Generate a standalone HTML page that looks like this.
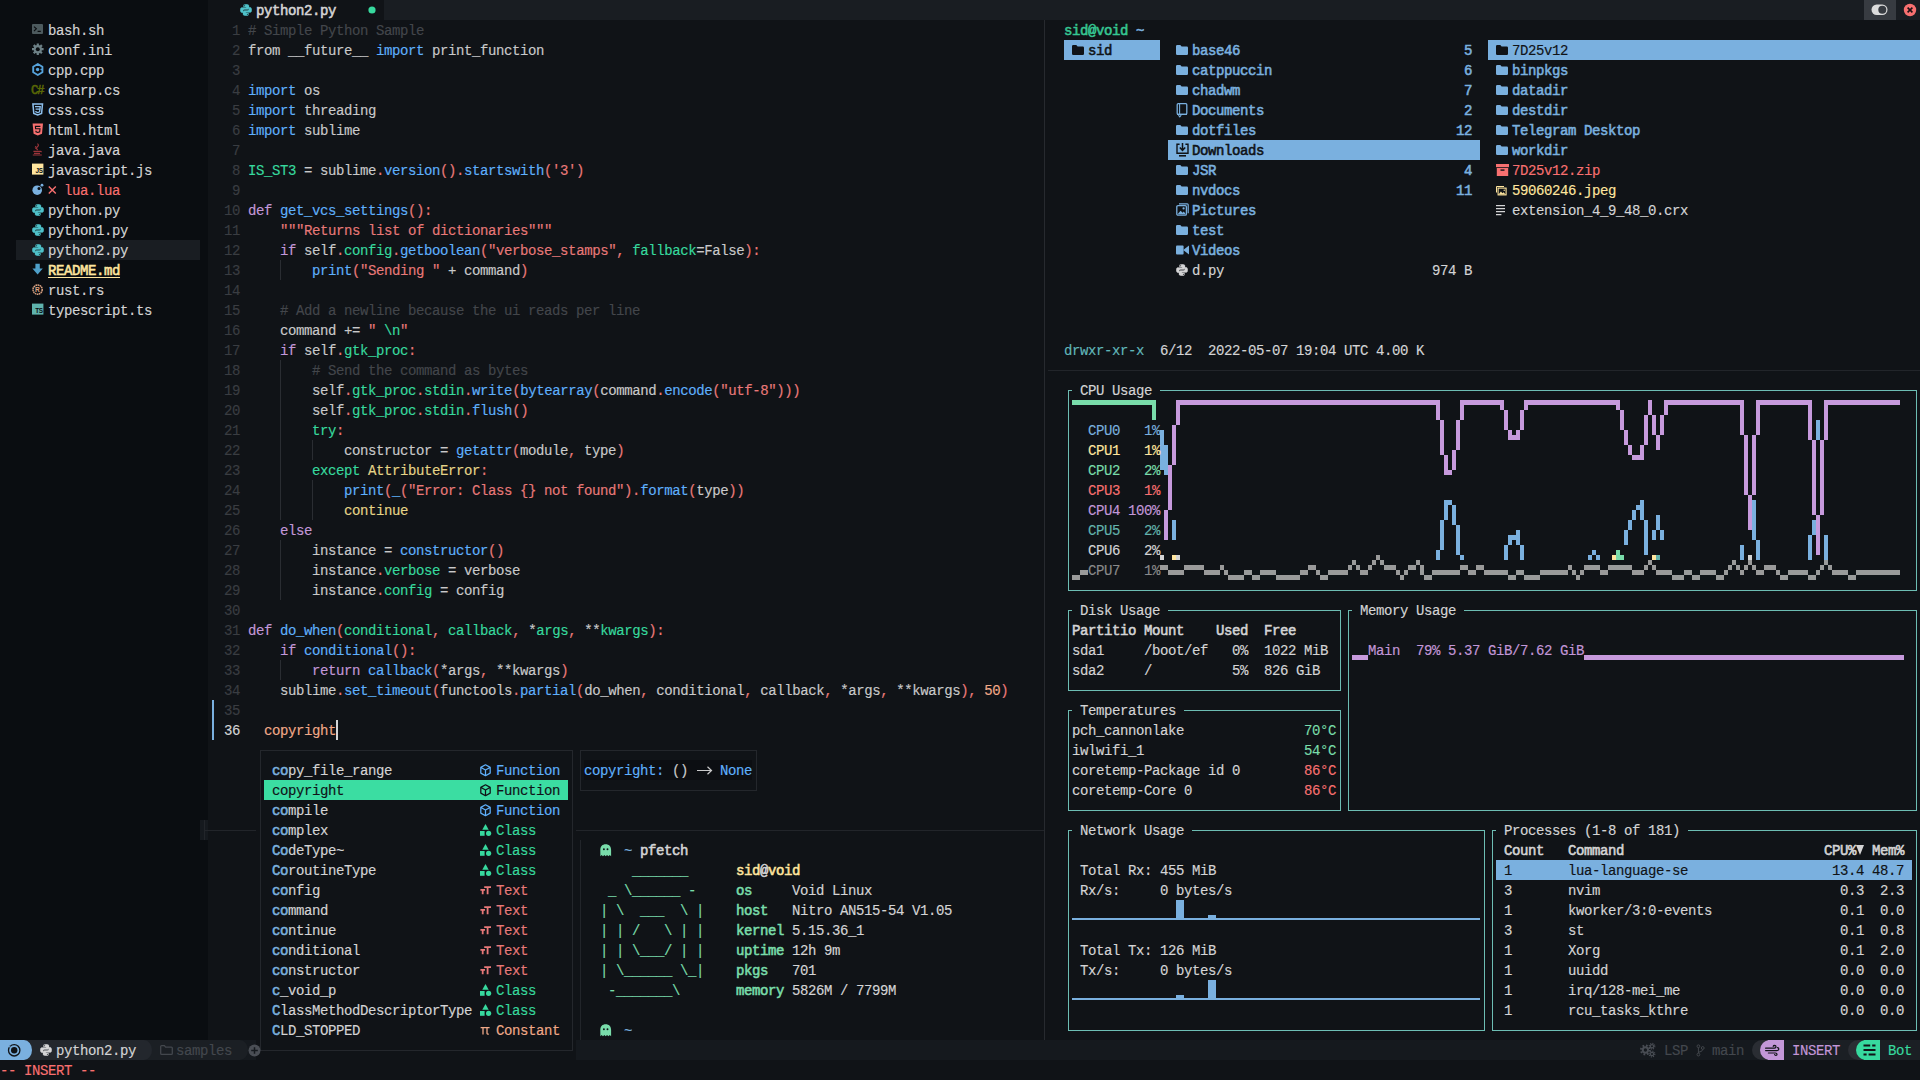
<!DOCTYPE html>
<html><head><meta charset="utf-8"><title>nvim</title>
<style>
html,body{margin:0;padding:0;overflow:hidden}
body{width:1920px;height:1080px;overflow:hidden;position:relative;background:#101317;
font-family:"Liberation Mono",monospace;font-size:14px;letter-spacing:-0.4px;line-height:20px;color:#c9c9ca}
.x{position:absolute;display:block}
.l{position:absolute;white-space:pre;height:20px;margin-top:1px;-webkit-text-stroke:0.15px}
b{font-weight:normal}
.bd{-webkit-text-stroke:0.55px}
.ul{text-decoration:underline;text-underline-offset:2px}
.bg{color:#101317}
.dark{color:#0a0d11}
.tab{color:#191d22}
.line{color:#22252a}
.w{color:#c9c9ca}
.W{color:#d4d4d5}
.c{color:#43464b}
.ln{color:#3a3d42}
.r{color:#e87979}
.R{color:#f87070}
.g{color:#37d99e}
.G{color:#79dcaa}
.b{color:#5fb0fc}
.B{color:#7ab0df}
.p{color:#c397d8}
.y{color:#e5d487}
.Y{color:#ffe59e}
.o{color:#f0a988}
.t{color:#63b3ad}
.k{color:#101317}
.gr{color:#4a4e54}
.cy{color:#50cad2}
.gy{color:#8a8a8a}
.sg{color:#43474d}
.rg{color:#36c692}
.dx{color:#60b6ba}
</style></head>
<body>
<i class="x" style="left:0px;top:0px;width:208px;height:1040px;background:#0a0d11;"></i>
<i class="x" style="left:384px;top:0px;width:1536px;height:20px;background:#191d22;"></i>
<i class="x" style="left:0px;top:1040px;width:1920px;height:20px;background:#15191e;"></i>
<i class="x" style="left:1044px;top:20px;width:1px;height:1020px;background:#272a2f;"></i>
<i class="x" style="left:1048px;top:370px;width:872px;height:1px;background:#22252a;"></i>
<i class="x" style="left:200px;top:820px;width:8px;height:20px;background:#15191e;"></i>
<i class="x" style="left:204px;top:820px;width:1px;height:20px;background:#22252a;"></i>
<i class="x" style="left:204px;top:830px;width:840px;height:1px;background:#22252a;"></i>
<i class="x" style="left:580px;top:840px;width:1px;height:200px;background:#22252a;"></i>
<i class="x" style="left:16px;top:240px;width:184px;height:20px;background:#191d22;"></i>
<div class="l" style="left:48px;top:20px"><b class="W">bash.sh</b></div>
<div class="l" style="left:48px;top:40px"><b class="W">conf.ini</b></div>
<div class="l" style="left:48px;top:60px"><b class="W">cpp.cpp</b></div>
<div class="l" style="left:48px;top:80px"><b class="W">csharp.cs</b></div>
<div class="l" style="left:48px;top:100px"><b class="W">css.css</b></div>
<div class="l" style="left:48px;top:120px"><b class="W">html.html</b></div>
<div class="l" style="left:48px;top:140px"><b class="W">java.java</b></div>
<div class="l" style="left:48px;top:160px"><b class="W">javascript.js</b></div>
<div class="l" style="left:48px;top:200px"><b class="W">python.py</b></div>
<div class="l" style="left:48px;top:220px"><b class="W">python1.py</b></div>
<div class="l" style="left:48px;top:240px"><b class="W">python2.py</b></div>
<div class="l" style="left:48px;top:280px"><b class="W">rust.rs</b></div>
<div class="l" style="left:48px;top:300px"><b class="W">typescript.ts</b></div>
<div class="l" style="left:64px;top:180px"><b class="R">lua.lua</b></div>
<svg class="x" style="left:48px;top:185px;" width="9" height="10" viewBox="0 0 9 10"><path d="M0.8 1.4l7 7.2M7.8 1.4l-7 7.2" stroke="#f87070" stroke-width="1.4"/></svg>
<div class="l" style="left:48px;top:260px"><b class="Y bd ul">README.md</b></div>
<svg class="x" style="left:32px;top:23px;" width="12" height="14" viewBox="0 0 12 14"><rect x="0" y="1" width="11" height="10" rx="1" fill="#4d5a5e"/><path d="M2 3.6l2.4 2.2L2 8M5.6 8.4h3.2" fill="none" stroke="#0a0d11" stroke-width="1.1"/></svg>
<svg class="x" style="left:32px;top:43px;" width="12" height="14" viewBox="0 0 12 14"><g fill="#6d8086"><circle cx="5.8" cy="6.2" r="4.2"/><g stroke="#6d8086" stroke-width="2.2"><path d="M5.8 0.4v11.6M0 6.2h11.6M1.7 2.1l8.2 8.2M9.9 2.1l-8.2 8.2"/></g></g><circle cx="5.8" cy="6.2" r="2" fill="#0a0d11"/></svg>
<svg class="x" style="left:32px;top:63px;" width="12" height="14" viewBox="0 0 12 14"><path d="M5.8 1L10.4 3.7v5.6L5.8 12 1.2 9.3V3.7z" fill="none" stroke="#56a3dc" stroke-width="1.9" stroke-linejoin="round"/><circle cx="5.6" cy="6.5" r="1.7" fill="#56a3dc"/><path d="M8.4 6.5h2.6" stroke="#56a3dc" stroke-width="1.2"/></svg>
<div class="l bd" style="left:31px;top:80px;color:#596706;font-size:12.5px;letter-spacing:-1.6px">C#</div>
<svg class="x" style="left:32px;top:103px;" width="12" height="14" viewBox="0 0 12 14"><path d="M0.9 0.9h9.6l-.9 9.6L5.7 12 1.8 10.5z" fill="none" stroke="#8ec0ee" stroke-width="1.5"/><path d="M3 3.6h5.2l-.25 2.6H3.6M7.9 6.2l-.3 2.7L5.7 9.6 3.9 8.9l-.1-.9" fill="none" stroke="#8ec0ee" stroke-width="1.3"/></svg>
<svg class="x" style="left:32px;top:123px;" width="12" height="14" viewBox="0 0 12 14"><path d="M0.6 0.6h10.4l-1 10.2L5.8 12.4 1.6 10.8z" fill="#f87070"/><path d="M8.4 3.4H3.4l.2 2.4h4.4l-.3 3L5.8 9.5 4 8.8l-.1-1" fill="none" stroke="#0a0d11" stroke-width="1.1"/></svg>
<svg class="x" style="left:32px;top:143px;" width="12" height="14" viewBox="0 0 12 14"><path d="M1.4 8.4h7q1 0 1 .8M2 10.4h6M0.8 12h9" fill="none" stroke="#9a343a" stroke-width="1.1"/><path d="M5.4 0.6q2 1.6 0 3.2t.4 3.2" fill="none" stroke="#9a343a" stroke-width="1.2"/><path d="M3.8 3q-1 1.6.2 3" fill="none" stroke="#9a343a" stroke-width="1"/></svg>
<svg class="x" style="left:32px;top:163px;" width="12" height="14" viewBox="0 0 12 14"><rect x="0" y="0.6" width="11.4" height="11" fill="#ffe59e"/><text x="3.4" y="10.4" font-family="Liberation Sans" font-weight="bold" font-size="6.4" fill="#0a0d11" letter-spacing="-0.3">JS</text></svg>
<svg class="x" style="left:32px;top:183px;" width="12" height="14" viewBox="0 0 12 14"><circle cx="5.2" cy="7.2" r="4.8" fill="#7ab0df"/><circle cx="7" cy="5.4" r="1.5" fill="#0a0d11"/><circle cx="10" cy="2.2" r="1.4" fill="#7ab0df"/></svg>
<svg class="x" style="left:32px;top:204px;" width="12" height="12" viewBox="0 0 12 12"><path d="M5.9 0.2C3.4 0.2 3.5 1.3 3.5 1.3v1.6h2.6v0.6H2.2S0.2 3.3 0.2 6s1.7 2.7 1.7 2.7h1.2V7.2s-0.1-1.7 1.7-1.7h2.6s1.6 0 1.6-1.6V1.7S9.2 0.2 5.9 0.2z" fill="#4fc1c9" stroke="#4fc1c9" stroke-width=".25"/><path d="M6.1 11.8c2.5 0 2.4-1.1 2.4-1.1V9.1H5.9V8.5h3.9s2 .2 2-2.5-1.7-2.7-1.7-2.7H8.9v1.5s.1 1.7-1.7 1.7H4.6S3 6.5 3 8.1v2.2s-.2 1.5 3.1 1.5z" fill="#4fc1c9" stroke="#4fc1c9" stroke-width=".25"/><circle cx="4.6" cy="1.7" r=".55" fill="#101317"/><circle cx="7.4" cy="10.3" r=".55" fill="#101317"/></svg>
<svg class="x" style="left:32px;top:224px;" width="12" height="12" viewBox="0 0 12 12"><path d="M5.9 0.2C3.4 0.2 3.5 1.3 3.5 1.3v1.6h2.6v0.6H2.2S0.2 3.3 0.2 6s1.7 2.7 1.7 2.7h1.2V7.2s-0.1-1.7 1.7-1.7h2.6s1.6 0 1.6-1.6V1.7S9.2 0.2 5.9 0.2z" fill="#4fc1c9" stroke="#4fc1c9" stroke-width=".25"/><path d="M6.1 11.8c2.5 0 2.4-1.1 2.4-1.1V9.1H5.9V8.5h3.9s2 .2 2-2.5-1.7-2.7-1.7-2.7H8.9v1.5s.1 1.7-1.7 1.7H4.6S3 6.5 3 8.1v2.2s-.2 1.5 3.1 1.5z" fill="#4fc1c9" stroke="#4fc1c9" stroke-width=".25"/><circle cx="4.6" cy="1.7" r=".55" fill="#101317"/><circle cx="7.4" cy="10.3" r=".55" fill="#101317"/></svg>
<svg class="x" style="left:32px;top:244px;" width="12" height="12" viewBox="0 0 12 12"><path d="M5.9 0.2C3.4 0.2 3.5 1.3 3.5 1.3v1.6h2.6v0.6H2.2S0.2 3.3 0.2 6s1.7 2.7 1.7 2.7h1.2V7.2s-0.1-1.7 1.7-1.7h2.6s1.6 0 1.6-1.6V1.7S9.2 0.2 5.9 0.2z" fill="#4fc1c9" stroke="#4fc1c9" stroke-width=".25"/><path d="M6.1 11.8c2.5 0 2.4-1.1 2.4-1.1V9.1H5.9V8.5h3.9s2 .2 2-2.5-1.7-2.7-1.7-2.7H8.9v1.5s.1 1.7-1.7 1.7H4.6S3 6.5 3 8.1v2.2s-.2 1.5 3.1 1.5z" fill="#4fc1c9" stroke="#4fc1c9" stroke-width=".25"/><circle cx="4.6" cy="1.7" r=".55" fill="#101317"/><circle cx="7.4" cy="10.3" r=".55" fill="#101317"/></svg>
<svg class="x" style="left:32px;top:263px;" width="12" height="14" viewBox="0 0 12 14"><path d="M3.4 0.8h4.4v4.6h3L5.6 11.6 0.4 5.4h3z" fill="#4e9fc9"/></svg>
<svg class="x" style="left:32px;top:283px;" width="12" height="14" viewBox="0 0 12 14"><circle cx="5.6" cy="6.6" r="4.6" fill="none" stroke="#dea584" stroke-width="1.5" stroke-dasharray="1.6 0.5"/><text x="3" y="9" font-family="Liberation Sans" font-weight="bold" font-size="6.6" fill="#dea584">R</text></svg>
<svg class="x" style="left:32px;top:303px;" width="12" height="14" viewBox="0 0 12 14"><rect x="0" y="0.6" width="11.4" height="11" fill="#5fb3ad"/><text x="3.2" y="10.4" font-family="Liberation Sans" font-weight="bold" font-size="6.4" fill="#0a0d11" letter-spacing="-0.3">TS</text></svg>
<svg class="x" style="left:240px;top:4px;" width="12" height="12" viewBox="0 0 12 12"><path d="M5.9 0.2C3.4 0.2 3.5 1.3 3.5 1.3v1.6h2.6v0.6H2.2S0.2 3.3 0.2 6s1.7 2.7 1.7 2.7h1.2V7.2s-0.1-1.7 1.7-1.7h2.6s1.6 0 1.6-1.6V1.7S9.2 0.2 5.9 0.2z" fill="#4fc1c9" stroke="#4fc1c9" stroke-width=".25"/><path d="M6.1 11.8c2.5 0 2.4-1.1 2.4-1.1V9.1H5.9V8.5h3.9s2 .2 2-2.5-1.7-2.7-1.7-2.7H8.9v1.5s.1 1.7-1.7 1.7H4.6S3 6.5 3 8.1v2.2s-.2 1.5 3.1 1.5z" fill="#4fc1c9" stroke="#4fc1c9" stroke-width=".25"/><circle cx="4.6" cy="1.7" r=".55" fill="#101317"/><circle cx="7.4" cy="10.3" r=".55" fill="#101317"/></svg>
<div class="l" style="left:256px;top:0px"><b class="W bd">python2.py</b></div>
<svg class="x" style="left:368px;top:6px;" width="8" height="8" viewBox="0 0 8 8"><circle cx="4" cy="4" r="3.6" fill="#37d99e"/></svg>
<i class="x" style="left:1864px;top:0px;width:32px;height:20px;background:#373b41;"></i>
<svg class="x" style="left:1871px;top:4px;" width="18" height="12" viewBox="0 0 18 12"><rect x="0.5" y="0.5" width="16" height="10.5" rx="5.2" fill="#dcdcdc"/><circle cx="11.3" cy="5.8" r="4" fill="#373b41"/></svg>
<svg class="x" style="left:1903px;top:3px;" width="14" height="14" viewBox="0 0 14 14"><circle cx="7" cy="7" r="6.2" fill="#f87070"/><path d="M4.6 4.6l4.8 4.8M9.4 4.6l-4.8 4.8" stroke="#1b1014" stroke-width="1.6"/></svg>
<div class="l" style="left:224px;top:20px"><b class="ln"> 1</b></div>
<div class="l" style="left:224px;top:40px"><b class="ln"> 2</b></div>
<div class="l" style="left:224px;top:60px"><b class="ln"> 3</b></div>
<div class="l" style="left:224px;top:80px"><b class="ln"> 4</b></div>
<div class="l" style="left:224px;top:100px"><b class="ln"> 5</b></div>
<div class="l" style="left:224px;top:120px"><b class="ln"> 6</b></div>
<div class="l" style="left:224px;top:140px"><b class="ln"> 7</b></div>
<div class="l" style="left:224px;top:160px"><b class="ln"> 8</b></div>
<div class="l" style="left:224px;top:180px"><b class="ln"> 9</b></div>
<div class="l" style="left:224px;top:200px"><b class="ln">10</b></div>
<div class="l" style="left:224px;top:220px"><b class="ln">11</b></div>
<div class="l" style="left:224px;top:240px"><b class="ln">12</b></div>
<div class="l" style="left:224px;top:260px"><b class="ln">13</b></div>
<div class="l" style="left:224px;top:280px"><b class="ln">14</b></div>
<div class="l" style="left:224px;top:300px"><b class="ln">15</b></div>
<div class="l" style="left:224px;top:320px"><b class="ln">16</b></div>
<div class="l" style="left:224px;top:340px"><b class="ln">17</b></div>
<div class="l" style="left:224px;top:360px"><b class="ln">18</b></div>
<div class="l" style="left:224px;top:380px"><b class="ln">19</b></div>
<div class="l" style="left:224px;top:400px"><b class="ln">20</b></div>
<div class="l" style="left:224px;top:420px"><b class="ln">21</b></div>
<div class="l" style="left:224px;top:440px"><b class="ln">22</b></div>
<div class="l" style="left:224px;top:460px"><b class="ln">23</b></div>
<div class="l" style="left:224px;top:480px"><b class="ln">24</b></div>
<div class="l" style="left:224px;top:500px"><b class="ln">25</b></div>
<div class="l" style="left:224px;top:520px"><b class="ln">26</b></div>
<div class="l" style="left:224px;top:540px"><b class="ln">27</b></div>
<div class="l" style="left:224px;top:560px"><b class="ln">28</b></div>
<div class="l" style="left:224px;top:580px"><b class="ln">29</b></div>
<div class="l" style="left:224px;top:600px"><b class="ln">30</b></div>
<div class="l" style="left:224px;top:620px"><b class="ln">31</b></div>
<div class="l" style="left:224px;top:640px"><b class="ln">32</b></div>
<div class="l" style="left:224px;top:660px"><b class="ln">33</b></div>
<div class="l" style="left:224px;top:680px"><b class="ln">34</b></div>
<div class="l" style="left:224px;top:700px"><b class="ln">35</b></div>
<div class="l" style="left:224px;top:720px"><b class="W">36</b></div>
<i class="x" style="left:212px;top:700px;width:1.5px;height:40px;background:#7ab0df;"></i>
<i class="x" style="left:280px;top:260px;width:1px;height:20px;background:#2a2d32;"></i>
<i class="x" style="left:280px;top:360px;width:1px;height:20px;background:#2a2d32;"></i>
<i class="x" style="left:280px;top:380px;width:1px;height:20px;background:#2a2d32;"></i>
<i class="x" style="left:280px;top:400px;width:1px;height:20px;background:#2a2d32;"></i>
<i class="x" style="left:280px;top:420px;width:1px;height:20px;background:#2a2d32;"></i>
<i class="x" style="left:280px;top:440px;width:1px;height:20px;background:#2a2d32;"></i>
<i class="x" style="left:280px;top:460px;width:1px;height:20px;background:#2a2d32;"></i>
<i class="x" style="left:280px;top:480px;width:1px;height:20px;background:#2a2d32;"></i>
<i class="x" style="left:280px;top:500px;width:1px;height:20px;background:#2a2d32;"></i>
<i class="x" style="left:280px;top:540px;width:1px;height:20px;background:#2a2d32;"></i>
<i class="x" style="left:280px;top:560px;width:1px;height:20px;background:#2a2d32;"></i>
<i class="x" style="left:280px;top:580px;width:1px;height:20px;background:#2a2d32;"></i>
<i class="x" style="left:280px;top:660px;width:1px;height:20px;background:#2a2d32;"></i>
<i class="x" style="left:312px;top:440px;width:1px;height:20px;background:#2a2d32;"></i>
<i class="x" style="left:312px;top:480px;width:1px;height:20px;background:#2a2d32;"></i>
<i class="x" style="left:312px;top:500px;width:1px;height:20px;background:#2a2d32;"></i>
<div class="l" style="left:248px;top:20px"><b class="c"># Simple Python Sample</b></div>
<div class="l" style="left:248px;top:40px">from __future__ <b class="b">import</b> print_function</div>
<div class="l" style="left:248px;top:80px"><b class="b">import</b> os</div>
<div class="l" style="left:248px;top:100px"><b class="b">import</b> threading</div>
<div class="l" style="left:248px;top:120px"><b class="b">import</b> sublime</div>
<div class="l" style="left:248px;top:160px"><b class="g">IS_ST3</b> = sublime<b class="r">.</b><b class="b">version</b><b class="r">().</b><b class="b">startswith</b><b class="r">('3')</b></div>
<div class="l" style="left:248px;top:200px"><b class="p">def</b> <b class="b">get_vcs_settings</b><b class="r">():</b></div>
<div class="l" style="left:248px;top:220px"><b class="r">    """Returns list of dictionaries"""</b></div>
<div class="l" style="left:248px;top:240px">    <b class="p">if</b> self<b class="r">.</b><b class="g">config</b><b class="r">.</b><b class="b">getboolean</b><b class="r">("verbose_stamps", </b><b class="g">fallback</b>=False<b class="r">):</b></div>
<div class="l" style="left:248px;top:260px">        <b class="b">print</b><b class="r">("Sending "</b> + command<b class="r">)</b></div>
<div class="l" style="left:248px;top:300px"><b class="c">    # Add a newline because the ui reads per line</b></div>
<div class="l" style="left:248px;top:320px">    command += <b class="r">" </b><b class="g">\n</b><b class="r">"</b></div>
<div class="l" style="left:248px;top:340px">    <b class="p">if</b> self<b class="r">.</b><b class="g">gtk_proc</b><b class="r">:</b></div>
<div class="l" style="left:248px;top:360px"><b class="c">        # Send the command as bytes</b></div>
<div class="l" style="left:248px;top:380px">        self<b class="r">.</b><b class="g">gtk_proc</b><b class="r">.</b><b class="g">stdin</b><b class="r">.</b><b class="b">write</b><b class="r">(</b><b class="b">bytearray</b><b class="r">(</b>command<b class="r">.</b><b class="b">encode</b><b class="r">("utf-8")))</b></div>
<div class="l" style="left:248px;top:400px">        self<b class="r">.</b><b class="g">gtk_proc</b><b class="r">.</b><b class="g">stdin</b><b class="r">.</b><b class="b">flush</b><b class="r">()</b></div>
<div class="l" style="left:248px;top:420px">        <b class="g">try</b><b class="r">:</b></div>
<div class="l" style="left:248px;top:440px">            constructor = <b class="b">getattr</b><b class="r">(</b>module<b class="r">,</b> type<b class="r">)</b></div>
<div class="l" style="left:248px;top:460px">        <b class="g">except</b> <b class="y">AttributeError</b><b class="r">:</b></div>
<div class="l" style="left:248px;top:480px">            <b class="b">print</b><b class="r">(</b><b class="b">_</b><b class="r">("Error: Class {} not found").</b><b class="b">format</b><b class="r">(</b>type<b class="r">))</b></div>
<div class="l" style="left:248px;top:500px">            <b class="y">continue</b></div>
<div class="l" style="left:248px;top:520px">    <b class="p">else</b></div>
<div class="l" style="left:248px;top:540px">        instance = <b class="b">constructor</b><b class="r">()</b></div>
<div class="l" style="left:248px;top:560px">        instance<b class="r">.</b><b class="g">verbose</b> = verbose</div>
<div class="l" style="left:248px;top:580px">        instance<b class="r">.</b><b class="g">config</b> = config</div>
<div class="l" style="left:248px;top:620px"><b class="p">def</b> <b class="b">do_when</b><b class="r">(</b><b class="g">conditional</b><b class="r">,</b> <b class="g">callback</b><b class="r">,</b> *<b class="g">args</b><b class="r">,</b> **<b class="g">kwargs</b><b class="r">):</b></div>
<div class="l" style="left:248px;top:640px">    <b class="p">if</b> <b class="b">conditional</b><b class="r">():</b></div>
<div class="l" style="left:248px;top:660px">        <b class="p">return</b> <b class="b">callback</b><b class="r">(</b>*args<b class="r">,</b> **kwargs<b class="r">)</b></div>
<div class="l" style="left:248px;top:680px">    sublime<b class="r">.</b><b class="b">set_timeout</b><b class="r">(</b>functools<b class="r">.</b><b class="b">partial</b><b class="r">(</b>do_when<b class="r">,</b> conditional<b class="r">,</b> callback<b class="r">,</b> *args<b class="r">,</b> **kwargs<b class="r">),</b> <b class="o">50</b><b class="r">)</b></div>
<div class="l" style="left:248px;top:720px"><b class="o">  copyright</b></div>
<i class="x" style="left:336px;top:720px;width:2px;height:20px;background:#d4d4d5;"></i>
<div class="l" style="left:0px;top:1060px"><b class="R">-- INSERT --</b></div>
<svg class="x" style="left:599.5px;top:843.5px;" width="12" height="13" viewBox="0 0 12 13"><path d="M0.3 6C0.3 2.4 2.4 0.3 5.7 0.3S11.1 2.4 11.1 6V12.2l-1.35-1.3-1.35 1.3-1.35-1.3-1.35 1.3-1.35-1.3-1.35 1.3-1.35-1.3-1.3 1.3z" fill="#79dcaa"/><circle cx="3.9" cy="5.2" r="0.95" fill="#101317"/><circle cx="7.5" cy="5.2" r="0.95" fill="#101317"/></svg>
<svg class="x" style="left:599.5px;top:1023.5px;" width="12" height="13" viewBox="0 0 12 13"><path d="M0.3 6C0.3 2.4 2.4 0.3 5.7 0.3S11.1 2.4 11.1 6V12.2l-1.35-1.3-1.35 1.3-1.35-1.3-1.35 1.3-1.35-1.3-1.35 1.3-1.35-1.3-1.3 1.3z" fill="#79dcaa"/><circle cx="3.9" cy="5.2" r="0.95" fill="#101317"/><circle cx="7.5" cy="5.2" r="0.95" fill="#101317"/></svg>
<div class="l" style="left:624px;top:840px"><b class="B">~</b><b class="W bd"> pfetch</b></div>
<div class="l" style="left:624px;top:1020px"><b class="B">~</b></div>
<div class="l" style="left:600px;top:860px"><b class="G">    _______</b></div>
<div class="l" style="left:600px;top:880px"><b class="G"> _ \______ -</b></div>
<div class="l" style="left:600px;top:900px"><b class="G">| \  ___  \ |</b></div>
<div class="l" style="left:600px;top:920px"><b class="G">| | /   \ | |</b></div>
<div class="l" style="left:600px;top:940px"><b class="G">| | \___/ | |</b></div>
<div class="l" style="left:600px;top:960px"><b class="G">| \______ \_|</b></div>
<div class="l" style="left:600px;top:980px"><b class="G"> -_______\</b></div>
<div class="l" style="left:736px;top:860px"><b class="Y bd">sid</b><b class="W bd">@</b><b class="Y bd">void</b></div>
<div class="l" style="left:736px;top:880px"><b class="G bd">os</b></div>
<div class="l" style="left:792px;top:880px"><b class="W">Void Linux</b></div>
<div class="l" style="left:736px;top:900px"><b class="G bd">host</b></div>
<div class="l" style="left:792px;top:900px"><b class="W">Nitro AN515-54 V1.05</b></div>
<div class="l" style="left:736px;top:920px"><b class="G bd">kernel</b></div>
<div class="l" style="left:792px;top:920px"><b class="W">5.15.36_1</b></div>
<div class="l" style="left:736px;top:940px"><b class="G bd">uptime</b></div>
<div class="l" style="left:792px;top:940px"><b class="W">12h 9m</b></div>
<div class="l" style="left:736px;top:960px"><b class="G bd">pkgs</b></div>
<div class="l" style="left:792px;top:960px"><b class="W">701</b></div>
<div class="l" style="left:736px;top:980px"><b class="G bd">memory</b></div>
<div class="l" style="left:792px;top:980px"><b class="W">5826M / 7799M</b></div>
<i class="x" style="left:256px;top:740px;width:320px;height:320px;background:#101317;"></i>
<i class="x" style="left:260px;top:750px;width:313px;height:301px;background:transparent;border:1px solid #24272c;box-sizing:border-box"></i>
<i class="x" style="left:264px;top:780px;width:304px;height:20px;background:#3bdda2;"></i>
<div class="l" style="left:272px;top:760px"><b class="B bd">co</b><b class="W">py_file_range</b></div>
<div class="l" style="left:496px;top:760px"><b class="b">Function</b></div>
<svg class="x" style="left:480px;top:764px;" width="12" height="13" viewBox="0 0 12 13"><path d="M5.5 0.8L10.2 3.4v5.7L5.5 11.7 0.8 9.1V3.4zM1 3.5L5.5 6l4.5-2.5M5.5 6v5.5" fill="none" stroke="#5fb0fc" stroke-width="1.25" stroke-linejoin="round"/></svg>
<div class="l" style="left:272px;top:780px"><b class="k">copyright</b></div>
<div class="l" style="left:496px;top:780px"><b class="k">Function</b></div>
<svg class="x" style="left:480px;top:784px;" width="12" height="13" viewBox="0 0 12 13"><path d="M5.5 0.8L10.2 3.4v5.7L5.5 11.7 0.8 9.1V3.4zM1 3.5L5.5 6l4.5-2.5M5.5 6v5.5" fill="none" stroke="#101317" stroke-width="1.25" stroke-linejoin="round"/></svg>
<div class="l" style="left:272px;top:800px"><b class="B bd">co</b><b class="W">mpile</b></div>
<div class="l" style="left:496px;top:800px"><b class="b">Function</b></div>
<svg class="x" style="left:480px;top:804px;" width="12" height="13" viewBox="0 0 12 13"><path d="M5.5 0.8L10.2 3.4v5.7L5.5 11.7 0.8 9.1V3.4zM1 3.5L5.5 6l4.5-2.5M5.5 6v5.5" fill="none" stroke="#5fb0fc" stroke-width="1.25" stroke-linejoin="round"/></svg>
<div class="l" style="left:272px;top:820px"><b class="B bd">co</b><b class="W">mplex</b></div>
<div class="l" style="left:496px;top:820px"><b class="g">Class</b></div>
<svg class="x" style="left:480px;top:824px;" width="12" height="13" viewBox="0 0 12 13"><path d="M5.5 0L8.7 5.8H2.3z" fill="#37d99e"/><rect x="0" y="7" width="4.6" height="4.8" fill="#37d99e"/><circle cx="8.6" cy="9.3" r="2.6" fill="#37d99e"/></svg>
<div class="l" style="left:272px;top:840px"><b class="B bd">Co</b><b class="W">deType~</b></div>
<div class="l" style="left:496px;top:840px"><b class="g">Class</b></div>
<svg class="x" style="left:480px;top:844px;" width="12" height="13" viewBox="0 0 12 13"><path d="M5.5 0L8.7 5.8H2.3z" fill="#37d99e"/><rect x="0" y="7" width="4.6" height="4.8" fill="#37d99e"/><circle cx="8.6" cy="9.3" r="2.6" fill="#37d99e"/></svg>
<div class="l" style="left:272px;top:860px"><b class="B bd">Co</b><b class="W">routineType</b></div>
<div class="l" style="left:496px;top:860px"><b class="g">Class</b></div>
<svg class="x" style="left:480px;top:864px;" width="12" height="13" viewBox="0 0 12 13"><path d="M5.5 0L8.7 5.8H2.3z" fill="#37d99e"/><rect x="0" y="7" width="4.6" height="4.8" fill="#37d99e"/><circle cx="8.6" cy="9.3" r="2.6" fill="#37d99e"/></svg>
<div class="l" style="left:272px;top:880px"><b class="B bd">co</b><b class="W">nfig</b></div>
<div class="l" style="left:496px;top:880px"><b class="r">Text</b></div>
<svg class="x" style="left:480px;top:884px;" width="12" height="13" viewBox="0 0 12 13"><path d="M4.2 3.2h6.8M7.6 3.2v7M0.4 5.8h4.6M2.7 5.8v4.4" fill="none" stroke="#e87979" stroke-width="1.8"/></svg>
<div class="l" style="left:272px;top:900px"><b class="B bd">co</b><b class="W">mmand</b></div>
<div class="l" style="left:496px;top:900px"><b class="r">Text</b></div>
<svg class="x" style="left:480px;top:904px;" width="12" height="13" viewBox="0 0 12 13"><path d="M4.2 3.2h6.8M7.6 3.2v7M0.4 5.8h4.6M2.7 5.8v4.4" fill="none" stroke="#e87979" stroke-width="1.8"/></svg>
<div class="l" style="left:272px;top:920px"><b class="B bd">co</b><b class="W">ntinue</b></div>
<div class="l" style="left:496px;top:920px"><b class="r">Text</b></div>
<svg class="x" style="left:480px;top:924px;" width="12" height="13" viewBox="0 0 12 13"><path d="M4.2 3.2h6.8M7.6 3.2v7M0.4 5.8h4.6M2.7 5.8v4.4" fill="none" stroke="#e87979" stroke-width="1.8"/></svg>
<div class="l" style="left:272px;top:940px"><b class="B bd">co</b><b class="W">nditional</b></div>
<div class="l" style="left:496px;top:940px"><b class="r">Text</b></div>
<svg class="x" style="left:480px;top:944px;" width="12" height="13" viewBox="0 0 12 13"><path d="M4.2 3.2h6.8M7.6 3.2v7M0.4 5.8h4.6M2.7 5.8v4.4" fill="none" stroke="#e87979" stroke-width="1.8"/></svg>
<div class="l" style="left:272px;top:960px"><b class="B bd">co</b><b class="W">nstructor</b></div>
<div class="l" style="left:496px;top:960px"><b class="r">Text</b></div>
<svg class="x" style="left:480px;top:964px;" width="12" height="13" viewBox="0 0 12 13"><path d="M4.2 3.2h6.8M7.6 3.2v7M0.4 5.8h4.6M2.7 5.8v4.4" fill="none" stroke="#e87979" stroke-width="1.8"/></svg>
<div class="l" style="left:272px;top:980px"><b class="B bd">c</b><b class="W">_void_p</b></div>
<div class="l" style="left:496px;top:980px"><b class="g">Class</b></div>
<svg class="x" style="left:480px;top:984px;" width="12" height="13" viewBox="0 0 12 13"><path d="M5.5 0L8.7 5.8H2.3z" fill="#37d99e"/><rect x="0" y="7" width="4.6" height="4.8" fill="#37d99e"/><circle cx="8.6" cy="9.3" r="2.6" fill="#37d99e"/></svg>
<div class="l" style="left:272px;top:1000px"><b class="B bd">C</b><b class="W">lassMethodDescriptorType</b></div>
<div class="l" style="left:496px;top:1000px"><b class="g">Class</b></div>
<svg class="x" style="left:480px;top:1004px;" width="12" height="13" viewBox="0 0 12 13"><path d="M5.5 0L8.7 5.8H2.3z" fill="#37d99e"/><rect x="0" y="7" width="4.6" height="4.8" fill="#37d99e"/><circle cx="8.6" cy="9.3" r="2.6" fill="#37d99e"/></svg>
<div class="l" style="left:272px;top:1020px"><b class="B bd">C</b><b class="W">LD_STOPPED</b></div>
<div class="l" style="left:496px;top:1020px"><b class="o">Constant</b></div>
<svg class="x" style="left:480px;top:1024px;" width="12" height="13" viewBox="0 0 12 13"><path d="M0.6 3.6h9M3 3.6v6.8M7 3.6v5.4q0 1.4 1.8 1.2" fill="none" stroke="#f0a988" stroke-width="1.3"/></svg>
<i class="x" style="left:576px;top:740px;width:184px;height:60px;background:#101317;"></i>
<i class="x" style="left:580px;top:750px;width:177px;height:41px;background:transparent;border:1px solid #24272c;box-sizing:border-box"></i>
<i class="x" style="left:584px;top:760px;width:168px;height:20px;background:#0c0e12;"></i>
<div class="l" style="left:584px;top:760px"><b class="b">copyright:</b> ()    <b class="b">None</b></div>
<svg class="x" style="left:696px;top:764px;" width="18" height="12" viewBox="0 0 18 12"><path d="M1 6.5h14.5M11.5 2.8l4 3.7-4 3.7" fill="none" stroke="#c9c9ca" stroke-width="1.2"/></svg>
<div class="l" style="left:1064px;top:20px"><b class="rg bd">sid@void</b><b class="B bd"> ~</b></div>
<i class="x" style="left:1064px;top:40px;width:96px;height:20px;background:#7ab0df;"></i>
<svg class="x" style="left:1072px;top:45px;" width="12" height="10" viewBox="0 0 12 10"><path d="M0 1.2Q0 0 1.2 0H4.3L5.6 1.6H10.8Q12 1.6 12 2.8V8.8Q12 10 10.8 10H1.2Q0 10 0 8.8z" fill="#101317"/></svg>
<div class="l" style="left:1088px;top:40px"><b class="k bd">sid</b></div>
<svg class="x" style="left:1176px;top:45px;" width="12" height="10" viewBox="0 0 12 10"><path d="M0 1.2Q0 0 1.2 0H4.3L5.6 1.6H10.8Q12 1.6 12 2.8V8.8Q12 10 10.8 10H1.2Q0 10 0 8.8z" fill="#7ab0df"/></svg>
<div class="l" style="left:1192px;top:40px"><b class="B bd">base46</b></div>
<div class="l" style="left:1464px;top:40px"><b class="B bd">5</b></div>
<svg class="x" style="left:1176px;top:65px;" width="12" height="10" viewBox="0 0 12 10"><path d="M0 1.2Q0 0 1.2 0H4.3L5.6 1.6H10.8Q12 1.6 12 2.8V8.8Q12 10 10.8 10H1.2Q0 10 0 8.8z" fill="#7ab0df"/></svg>
<div class="l" style="left:1192px;top:60px"><b class="B bd">catppuccin</b></div>
<div class="l" style="left:1464px;top:60px"><b class="B bd">6</b></div>
<svg class="x" style="left:1176px;top:85px;" width="12" height="10" viewBox="0 0 12 10"><path d="M0 1.2Q0 0 1.2 0H4.3L5.6 1.6H10.8Q12 1.6 12 2.8V8.8Q12 10 10.8 10H1.2Q0 10 0 8.8z" fill="#7ab0df"/></svg>
<div class="l" style="left:1192px;top:80px"><b class="B bd">chadwm</b></div>
<div class="l" style="left:1464px;top:80px"><b class="B bd">7</b></div>
<svg class="x" style="left:1176px;top:103px;" width="12" height="15" viewBox="0 0 12 15"><rect x="1.2" y="0.7" width="9.6" height="10.6" rx="1" fill="none" stroke="#7ab0df" stroke-width="1.3"/><path d="M3.6 1v10M1 11.4h10M2.4 12.2l1.4 1.6 1.4-1.6" fill="none" stroke="#7ab0df" stroke-width="1.1"/></svg>
<div class="l" style="left:1192px;top:100px"><b class="B bd">Documents</b></div>
<div class="l" style="left:1464px;top:100px"><b class="B bd">2</b></div>
<svg class="x" style="left:1176px;top:125px;" width="12" height="10" viewBox="0 0 12 10"><path d="M0 1.2Q0 0 1.2 0H4.3L5.6 1.6H10.8Q12 1.6 12 2.8V8.8Q12 10 10.8 10H1.2Q0 10 0 8.8z" fill="#7ab0df"/></svg>
<div class="l" style="left:1192px;top:120px"><b class="B bd">dotfiles</b></div>
<div class="l" style="left:1456px;top:120px"><b class="B bd">12</b></div>
<i class="x" style="left:1168px;top:140px;width:312px;height:20px;background:#7ab0df;"></i>
<svg class="x" style="left:1176px;top:143px;" width="13" height="15" viewBox="0 0 13 15"><path d="M3.6 1.2H1v9h11v-9H9.4" fill="none" stroke="#101317" stroke-width="1.4"/><path d="M6.5 0v7M3.8 4.4l2.7 2.9 2.7-2.9" fill="none" stroke="#101317" stroke-width="1.5"/><path d="M3 12.8h7" stroke="#101317" stroke-width="1.6"/></svg>
<div class="l" style="left:1192px;top:140px"><b class="k bd">Downloads</b></div>
<svg class="x" style="left:1176px;top:165px;" width="12" height="10" viewBox="0 0 12 10"><path d="M0 1.2Q0 0 1.2 0H4.3L5.6 1.6H10.8Q12 1.6 12 2.8V8.8Q12 10 10.8 10H1.2Q0 10 0 8.8z" fill="#7ab0df"/></svg>
<div class="l" style="left:1192px;top:160px"><b class="B bd">JSR</b></div>
<div class="l" style="left:1464px;top:160px"><b class="B bd">4</b></div>
<svg class="x" style="left:1176px;top:185px;" width="12" height="10" viewBox="0 0 12 10"><path d="M0 1.2Q0 0 1.2 0H4.3L5.6 1.6H10.8Q12 1.6 12 2.8V8.8Q12 10 10.8 10H1.2Q0 10 0 8.8z" fill="#7ab0df"/></svg>
<div class="l" style="left:1192px;top:180px"><b class="B bd">nvdocs</b></div>
<div class="l" style="left:1456px;top:180px"><b class="B bd">11</b></div>
<svg class="x" style="left:1176px;top:203px;" width="13" height="14" viewBox="0 0 13 14"><rect x="0.8" y="2.6" width="9.6" height="9.6" rx="1.2" fill="none" stroke="#7ab0df" stroke-width="1.3"/><path d="M3 0.8h8.2q1 0 1 1v8.4" fill="none" stroke="#7ab0df" stroke-width="1.2"/><path d="M1.6 11.2l3-3.4 2 2 1.2-1.2 2 2.6z" fill="#7ab0df"/><circle cx="7.6" cy="5.4" r="1.1" fill="#7ab0df"/></svg>
<div class="l" style="left:1192px;top:200px"><b class="B bd">Pictures</b></div>
<svg class="x" style="left:1176px;top:225px;" width="12" height="10" viewBox="0 0 12 10"><path d="M0 1.2Q0 0 1.2 0H4.3L5.6 1.6H10.8Q12 1.6 12 2.8V8.8Q12 10 10.8 10H1.2Q0 10 0 8.8z" fill="#7ab0df"/></svg>
<div class="l" style="left:1192px;top:220px"><b class="B bd">test</b></div>
<svg class="x" style="left:1176px;top:245px;" width="13" height="10" viewBox="0 0 13 10"><rect x="0" y="0.4" width="7.6" height="9.2" rx="1" fill="#7ab0df"/><path d="M7.2 5L13 0.6v8.8z" fill="#7ab0df"/></svg>
<div class="l" style="left:1192px;top:240px"><b class="B bd">Videos</b></div>
<svg class="x" style="left:1176px;top:264px;" width="12" height="12" viewBox="0 0 12 12"><path d="M5.9 0.2C3.4 0.2 3.5 1.3 3.5 1.3v1.6h2.6v0.6H2.2S0.2 3.3 0.2 6s1.7 2.7 1.7 2.7h1.2V7.2s-0.1-1.7 1.7-1.7h2.6s1.6 0 1.6-1.6V1.7S9.2 0.2 5.9 0.2z" fill="#d4d4d5" stroke="#d4d4d5" stroke-width=".25"/><path d="M6.1 11.8c2.5 0 2.4-1.1 2.4-1.1V9.1H5.9V8.5h3.9s2 .2 2-2.5-1.7-2.7-1.7-2.7H8.9v1.5s.1 1.7-1.7 1.7H4.6S3 6.5 3 8.1v2.2s-.2 1.5 3.1 1.5z" fill="#d4d4d5" stroke="#d4d4d5" stroke-width=".25"/><circle cx="4.6" cy="1.7" r=".55" fill="#101317"/><circle cx="7.4" cy="10.3" r=".55" fill="#101317"/></svg>
<div class="l" style="left:1192px;top:260px"><b class="W">d.py</b></div>
<div class="l" style="left:1432px;top:260px"><b class="W">974 B</b></div>
<i class="x" style="left:1488px;top:40px;width:432px;height:20px;background:#7ab0df;"></i>
<svg class="x" style="left:1496px;top:45px;" width="12" height="10" viewBox="0 0 12 10"><path d="M0 1.2Q0 0 1.2 0H4.3L5.6 1.6H10.8Q12 1.6 12 2.8V8.8Q12 10 10.8 10H1.2Q0 10 0 8.8z" fill="#101317"/></svg>
<div class="l" style="left:1512px;top:40px"><b class="k">7D25v12</b></div>
<svg class="x" style="left:1496px;top:65px;" width="12" height="10" viewBox="0 0 12 10"><path d="M0 1.2Q0 0 1.2 0H4.3L5.6 1.6H10.8Q12 1.6 12 2.8V8.8Q12 10 10.8 10H1.2Q0 10 0 8.8z" fill="#7ab0df"/></svg>
<div class="l" style="left:1512px;top:60px"><b class="B bd">binpkgs</b></div>
<svg class="x" style="left:1496px;top:85px;" width="12" height="10" viewBox="0 0 12 10"><path d="M0 1.2Q0 0 1.2 0H4.3L5.6 1.6H10.8Q12 1.6 12 2.8V8.8Q12 10 10.8 10H1.2Q0 10 0 8.8z" fill="#7ab0df"/></svg>
<div class="l" style="left:1512px;top:80px"><b class="B bd">datadir</b></div>
<svg class="x" style="left:1496px;top:105px;" width="12" height="10" viewBox="0 0 12 10"><path d="M0 1.2Q0 0 1.2 0H4.3L5.6 1.6H10.8Q12 1.6 12 2.8V8.8Q12 10 10.8 10H1.2Q0 10 0 8.8z" fill="#7ab0df"/></svg>
<div class="l" style="left:1512px;top:100px"><b class="B bd">destdir</b></div>
<svg class="x" style="left:1496px;top:125px;" width="12" height="10" viewBox="0 0 12 10"><path d="M0 1.2Q0 0 1.2 0H4.3L5.6 1.6H10.8Q12 1.6 12 2.8V8.8Q12 10 10.8 10H1.2Q0 10 0 8.8z" fill="#7ab0df"/></svg>
<div class="l" style="left:1512px;top:120px"><b class="B bd">Telegram Desktop</b></div>
<svg class="x" style="left:1496px;top:145px;" width="12" height="10" viewBox="0 0 12 10"><path d="M0 1.2Q0 0 1.2 0H4.3L5.6 1.6H10.8Q12 1.6 12 2.8V8.8Q12 10 10.8 10H1.2Q0 10 0 8.8z" fill="#7ab0df"/></svg>
<div class="l" style="left:1512px;top:140px"><b class="B bd">workdir</b></div>
<svg class="x" style="left:1496px;top:164px;" width="13" height="12" viewBox="0 0 13 12"><rect x="0" y="0" width="13" height="3.2" fill="#f87070"/><path d="M0.8 4h11.4v8H0.8z" fill="#f87070"/><rect x="4.5" y="5.4" width="4" height="1.4" fill="#101317"/></svg>
<div class="l" style="left:1512px;top:160px"><b class="R">7D25v12.zip</b></div>
<svg class="x" style="left:1496px;top:185.5px;" width="11" height="10" viewBox="0 0 11 10"><path d="M0.5 6.5V0.5H8" fill="none" stroke="#ffe59e" stroke-width="1"/><rect x="2.1" y="2.1" width="8" height="6.8" fill="#101317" stroke="#ffe59e" stroke-width="1.1"/><path d="M2.6 8.6l2.3-3 1.5 1.6 1.2-1 2 2.4z" fill="#ffe59e"/><circle cx="8.2" cy="4.2" r=".7" fill="#ffe59e"/></svg>
<div class="l" style="left:1512px;top:180px"><b class="Y">59060246.jpeg</b></div>
<svg class="x" style="left:1496px;top:205px;" width="10" height="11" viewBox="0 0 10 11"><path d="M0 0.7h9M0 3.7h9M0 6.7h9M0 9.7h5.4" stroke="#d4d4d5" stroke-width="1.2"/></svg>
<div class="l" style="left:1512px;top:200px"><b class="W">extension_4_9_48_0.crx</b></div>
<div class="l" style="left:1064px;top:340px"><b class="dx">drwxr-xr-x</b><b class="W">  6/12  2022-05-07 19:04 UTC 4.00 K</b></div>
<i class="x" style="left:1068px;top:390px;width:849px;height:201px;background:transparent;border:1px solid #6dbdb3;box-sizing:border-box"></i>
<i class="x" style="left:1072px;top:389px;width:88px;height:3px;background:#101317;"></i>
<div class="l" style="left:1080px;top:380px"><b class="W">CPU Usage</b></div>
<i class="x" style="left:1068px;top:610px;width:273px;height:81px;background:transparent;border:1px solid #6dbdb3;box-sizing:border-box"></i>
<i class="x" style="left:1072px;top:609px;width:96px;height:3px;background:#101317;"></i>
<div class="l" style="left:1080px;top:600px"><b class="W">Disk Usage</b></div>
<i class="x" style="left:1348px;top:610px;width:569px;height:201px;background:transparent;border:1px solid #6dbdb3;box-sizing:border-box"></i>
<i class="x" style="left:1352px;top:609px;width:112px;height:3px;background:#101317;"></i>
<div class="l" style="left:1360px;top:600px"><b class="W">Memory Usage</b></div>
<i class="x" style="left:1068px;top:710px;width:273px;height:101px;background:transparent;border:1px solid #6dbdb3;box-sizing:border-box"></i>
<i class="x" style="left:1072px;top:709px;width:112px;height:3px;background:#101317;"></i>
<div class="l" style="left:1080px;top:700px"><b class="W">Temperatures</b></div>
<i class="x" style="left:1068px;top:830px;width:417px;height:201px;background:transparent;border:1px solid #6dbdb3;box-sizing:border-box"></i>
<i class="x" style="left:1072px;top:829px;width:120px;height:3px;background:#101317;"></i>
<div class="l" style="left:1080px;top:820px"><b class="W">Network Usage</b></div>
<i class="x" style="left:1492px;top:830px;width:425px;height:201px;background:transparent;border:1px solid #6dbdb3;box-sizing:border-box"></i>
<i class="x" style="left:1496px;top:829px;width:192px;height:3px;background:#101317;"></i>
<div class="l" style="left:1504px;top:820px"><b class="W">Processes (1-8 of 181)</b></div>
<i class="x" style="left:1072px;top:575px;width:8px;height:5px;background:#9a9a9a;"></i>
<i class="x" style="left:1080px;top:570px;width:8px;height:5px;background:#9a9a9a;"></i>
<i class="x" style="left:1160px;top:565px;width:8px;height:5px;background:#9a9a9a;"></i>
<i class="x" style="left:1168px;top:570px;width:16px;height:5px;background:#9a9a9a;"></i>
<i class="x" style="left:1184px;top:565px;width:20px;height:5px;background:#9a9a9a;"></i>
<i class="x" style="left:1204px;top:570px;width:16px;height:5px;background:#9a9a9a;"></i>
<i class="x" style="left:1220px;top:565px;width:4px;height:5px;background:#9a9a9a;"></i>
<i class="x" style="left:1224px;top:570px;width:4px;height:5px;background:#9a9a9a;"></i>
<i class="x" style="left:1228px;top:575px;width:16px;height:5px;background:#9a9a9a;"></i>
<i class="x" style="left:1244px;top:570px;width:8px;height:5px;background:#9a9a9a;"></i>
<i class="x" style="left:1252px;top:575px;width:8px;height:5px;background:#9a9a9a;"></i>
<i class="x" style="left:1260px;top:570px;width:16px;height:5px;background:#9a9a9a;"></i>
<i class="x" style="left:1276px;top:575px;width:24px;height:5px;background:#9a9a9a;"></i>
<i class="x" style="left:1300px;top:570px;width:8px;height:5px;background:#9a9a9a;"></i>
<i class="x" style="left:1308px;top:565px;width:8px;height:5px;background:#9a9a9a;"></i>
<i class="x" style="left:1316px;top:570px;width:4px;height:5px;background:#9a9a9a;"></i>
<i class="x" style="left:1320px;top:575px;width:8px;height:5px;background:#9a9a9a;"></i>
<i class="x" style="left:1328px;top:570px;width:20px;height:5px;background:#9a9a9a;"></i>
<i class="x" style="left:1348px;top:565px;width:4px;height:5px;background:#9a9a9a;"></i>
<i class="x" style="left:1352px;top:560px;width:4px;height:5px;background:#9a9a9a;"></i>
<i class="x" style="left:1356px;top:565px;width:4px;height:5px;background:#9a9a9a;"></i>
<i class="x" style="left:1360px;top:570px;width:8px;height:5px;background:#9a9a9a;"></i>
<i class="x" style="left:1368px;top:565px;width:4px;height:5px;background:#9a9a9a;"></i>
<i class="x" style="left:1372px;top:560px;width:4px;height:5px;background:#9a9a9a;"></i>
<i class="x" style="left:1376px;top:555px;width:4px;height:5px;background:#9a9a9a;"></i>
<i class="x" style="left:1380px;top:560px;width:4px;height:5px;background:#9a9a9a;"></i>
<i class="x" style="left:1384px;top:565px;width:12px;height:5px;background:#9a9a9a;"></i>
<i class="x" style="left:1396px;top:570px;width:4px;height:5px;background:#9a9a9a;"></i>
<i class="x" style="left:1400px;top:575px;width:4px;height:5px;background:#9a9a9a;"></i>
<i class="x" style="left:1404px;top:570px;width:4px;height:5px;background:#9a9a9a;"></i>
<i class="x" style="left:1408px;top:565px;width:8px;height:5px;background:#9a9a9a;"></i>
<i class="x" style="left:1416px;top:560px;width:4px;height:5px;background:#9a9a9a;"></i>
<i class="x" style="left:1420px;top:565px;width:4px;height:5px;background:#9a9a9a;"></i>
<i class="x" style="left:1420px;top:570px;width:4px;height:5px;background:#9a9a9a;"></i>
<i class="x" style="left:1424px;top:575px;width:8px;height:5px;background:#9a9a9a;"></i>
<i class="x" style="left:1432px;top:570px;width:28px;height:5px;background:#9a9a9a;"></i>
<i class="x" style="left:1460px;top:565px;width:8px;height:5px;background:#9a9a9a;"></i>
<i class="x" style="left:1468px;top:570px;width:8px;height:5px;background:#9a9a9a;"></i>
<i class="x" style="left:1476px;top:565px;width:8px;height:5px;background:#9a9a9a;"></i>
<i class="x" style="left:1484px;top:570px;width:24px;height:5px;background:#9a9a9a;"></i>
<i class="x" style="left:1508px;top:575px;width:8px;height:5px;background:#9a9a9a;"></i>
<i class="x" style="left:1516px;top:570px;width:8px;height:5px;background:#9a9a9a;"></i>
<i class="x" style="left:1524px;top:575px;width:16px;height:5px;background:#9a9a9a;"></i>
<i class="x" style="left:1540px;top:570px;width:28px;height:5px;background:#9a9a9a;"></i>
<i class="x" style="left:1568px;top:565px;width:4px;height:5px;background:#9a9a9a;"></i>
<i class="x" style="left:1572px;top:570px;width:4px;height:5px;background:#9a9a9a;"></i>
<i class="x" style="left:1576px;top:575px;width:4px;height:5px;background:#9a9a9a;"></i>
<i class="x" style="left:1580px;top:570px;width:4px;height:5px;background:#9a9a9a;"></i>
<i class="x" style="left:1584px;top:565px;width:16px;height:5px;background:#9a9a9a;"></i>
<i class="x" style="left:1600px;top:570px;width:8px;height:5px;background:#9a9a9a;"></i>
<i class="x" style="left:1608px;top:565px;width:24px;height:5px;background:#9a9a9a;"></i>
<i class="x" style="left:1632px;top:570px;width:12px;height:5px;background:#9a9a9a;"></i>
<i class="x" style="left:1644px;top:565px;width:4px;height:5px;background:#9a9a9a;"></i>
<i class="x" style="left:1648px;top:560px;width:4px;height:5px;background:#9a9a9a;"></i>
<i class="x" style="left:1652px;top:565px;width:4px;height:5px;background:#9a9a9a;"></i>
<i class="x" style="left:1656px;top:570px;width:16px;height:5px;background:#9a9a9a;"></i>
<i class="x" style="left:1672px;top:575px;width:12px;height:5px;background:#9a9a9a;"></i>
<i class="x" style="left:1684px;top:570px;width:8px;height:5px;background:#9a9a9a;"></i>
<i class="x" style="left:1692px;top:575px;width:8px;height:5px;background:#9a9a9a;"></i>
<i class="x" style="left:1700px;top:570px;width:16px;height:5px;background:#9a9a9a;"></i>
<i class="x" style="left:1716px;top:575px;width:8px;height:5px;background:#9a9a9a;"></i>
<i class="x" style="left:1724px;top:570px;width:4px;height:5px;background:#9a9a9a;"></i>
<i class="x" style="left:1728px;top:565px;width:4px;height:5px;background:#9a9a9a;"></i>
<i class="x" style="left:1732px;top:560px;width:4px;height:5px;background:#9a9a9a;"></i>
<i class="x" style="left:1736px;top:565px;width:4px;height:5px;background:#9a9a9a;"></i>
<i class="x" style="left:1740px;top:570px;width:4px;height:5px;background:#9a9a9a;"></i>
<i class="x" style="left:1744px;top:565px;width:4px;height:5px;background:#9a9a9a;"></i>
<i class="x" style="left:1748px;top:560px;width:4px;height:5px;background:#9a9a9a;"></i>
<i class="x" style="left:1752px;top:565px;width:4px;height:5px;background:#9a9a9a;"></i>
<i class="x" style="left:1756px;top:570px;width:8px;height:5px;background:#9a9a9a;"></i>
<i class="x" style="left:1764px;top:565px;width:12px;height:5px;background:#9a9a9a;"></i>
<i class="x" style="left:1776px;top:570px;width:4px;height:5px;background:#9a9a9a;"></i>
<i class="x" style="left:1780px;top:575px;width:8px;height:5px;background:#9a9a9a;"></i>
<i class="x" style="left:1788px;top:570px;width:20px;height:5px;background:#9a9a9a;"></i>
<i class="x" style="left:1808px;top:575px;width:8px;height:5px;background:#9a9a9a;"></i>
<i class="x" style="left:1816px;top:570px;width:4px;height:5px;background:#9a9a9a;"></i>
<i class="x" style="left:1820px;top:565px;width:4px;height:5px;background:#9a9a9a;"></i>
<i class="x" style="left:1824px;top:560px;width:4px;height:5px;background:#9a9a9a;"></i>
<i class="x" style="left:1828px;top:565px;width:4px;height:5px;background:#9a9a9a;"></i>
<i class="x" style="left:1832px;top:570px;width:16px;height:5px;background:#9a9a9a;"></i>
<i class="x" style="left:1848px;top:575px;width:8px;height:5px;background:#9a9a9a;"></i>
<i class="x" style="left:1856px;top:570px;width:44px;height:5px;background:#9a9a9a;"></i>
<i class="x" style="left:1160px;top:430px;width:4px;height:40px;background:#7ab0df;"></i>
<i class="x" style="left:1164px;top:445px;width:4px;height:30px;background:#7ab0df;"></i>
<i class="x" style="left:1172px;top:520px;width:4px;height:20px;background:#7ab0df;"></i>
<i class="x" style="left:1436px;top:550px;width:4px;height:10px;background:#7ab0df;"></i>
<i class="x" style="left:1440px;top:520px;width:4px;height:30px;background:#7ab0df;"></i>
<i class="x" style="left:1444px;top:500px;width:4px;height:20px;background:#7ab0df;"></i>
<i class="x" style="left:1448px;top:500px;width:4px;height:5px;background:#7ab0df;"></i>
<i class="x" style="left:1452px;top:505px;width:4px;height:20px;background:#7ab0df;"></i>
<i class="x" style="left:1456px;top:525px;width:4px;height:30px;background:#7ab0df;"></i>
<i class="x" style="left:1460px;top:555px;width:4px;height:5px;background:#7ab0df;"></i>
<i class="x" style="left:1504px;top:545px;width:4px;height:15px;background:#7ab0df;"></i>
<i class="x" style="left:1508px;top:535px;width:4px;height:10px;background:#7ab0df;"></i>
<i class="x" style="left:1512px;top:535px;width:4px;height:5px;background:#7ab0df;"></i>
<i class="x" style="left:1516px;top:530px;width:4px;height:15px;background:#7ab0df;"></i>
<i class="x" style="left:1520px;top:545px;width:4px;height:15px;background:#7ab0df;"></i>
<i class="x" style="left:1588px;top:555px;width:4px;height:5px;background:#7ab0df;"></i>
<i class="x" style="left:1592px;top:550px;width:4px;height:5px;background:#7ab0df;"></i>
<i class="x" style="left:1596px;top:555px;width:4px;height:5px;background:#7ab0df;"></i>
<i class="x" style="left:1624px;top:530px;width:4px;height:15px;background:#7ab0df;"></i>
<i class="x" style="left:1628px;top:520px;width:4px;height:10px;background:#7ab0df;"></i>
<i class="x" style="left:1632px;top:510px;width:4px;height:10px;background:#7ab0df;"></i>
<i class="x" style="left:1636px;top:505px;width:4px;height:5px;background:#7ab0df;"></i>
<i class="x" style="left:1640px;top:500px;width:4px;height:20px;background:#7ab0df;"></i>
<i class="x" style="left:1644px;top:520px;width:4px;height:35px;background:#7ab0df;"></i>
<i class="x" style="left:1652px;top:530px;width:4px;height:10px;background:#7ab0df;"></i>
<i class="x" style="left:1656px;top:515px;width:4px;height:15px;background:#7ab0df;"></i>
<i class="x" style="left:1660px;top:530px;width:4px;height:10px;background:#7ab0df;"></i>
<i class="x" style="left:1740px;top:545px;width:4px;height:15px;background:#7ab0df;"></i>
<i class="x" style="left:1752px;top:500px;width:4px;height:40px;background:#7ab0df;"></i>
<i class="x" style="left:1756px;top:540px;width:4px;height:20px;background:#7ab0df;"></i>
<i class="x" style="left:1816px;top:420px;width:4px;height:20px;background:#7ab0df;"></i>
<i class="x" style="left:1812px;top:520px;width:4px;height:15px;background:#7ab0df;"></i>
<i class="x" style="left:1808px;top:535px;width:4px;height:25px;background:#7ab0df;"></i>
<i class="x" style="left:1824px;top:535px;width:4px;height:25px;background:#7ab0df;"></i>
<i class="x" style="left:1176px;top:400px;width:264px;height:5px;background:#c699dc;"></i>
<i class="x" style="left:1176px;top:400px;width:4px;height:25px;background:#c699dc;"></i>
<i class="x" style="left:1172px;top:425px;width:4px;height:40px;background:#c699dc;"></i>
<i class="x" style="left:1168px;top:465px;width:4px;height:45px;background:#c699dc;"></i>
<i class="x" style="left:1164px;top:510px;width:4px;height:30px;background:#c699dc;"></i>
<i class="x" style="left:1436px;top:400px;width:4px;height:20px;background:#c699dc;"></i>
<i class="x" style="left:1440px;top:420px;width:4px;height:35px;background:#c699dc;"></i>
<i class="x" style="left:1444px;top:455px;width:4px;height:20px;background:#c699dc;"></i>
<i class="x" style="left:1448px;top:470px;width:4px;height:5px;background:#c699dc;"></i>
<i class="x" style="left:1452px;top:450px;width:4px;height:20px;background:#c699dc;"></i>
<i class="x" style="left:1456px;top:420px;width:4px;height:30px;background:#c699dc;"></i>
<i class="x" style="left:1460px;top:400px;width:4px;height:20px;background:#c699dc;"></i>
<i class="x" style="left:1460px;top:400px;width:44px;height:5px;background:#c699dc;"></i>
<i class="x" style="left:1500px;top:400px;width:4px;height:10px;background:#c699dc;"></i>
<i class="x" style="left:1504px;top:410px;width:4px;height:20px;background:#c699dc;"></i>
<i class="x" style="left:1508px;top:430px;width:4px;height:10px;background:#c699dc;"></i>
<i class="x" style="left:1512px;top:435px;width:4px;height:5px;background:#c699dc;"></i>
<i class="x" style="left:1516px;top:430px;width:4px;height:10px;background:#c699dc;"></i>
<i class="x" style="left:1520px;top:410px;width:4px;height:20px;background:#c699dc;"></i>
<i class="x" style="left:1524px;top:400px;width:4px;height:10px;background:#c699dc;"></i>
<i class="x" style="left:1524px;top:400px;width:96px;height:5px;background:#c699dc;"></i>
<i class="x" style="left:1616px;top:400px;width:4px;height:10px;background:#c699dc;"></i>
<i class="x" style="left:1620px;top:410px;width:4px;height:20px;background:#c699dc;"></i>
<i class="x" style="left:1624px;top:430px;width:4px;height:15px;background:#c699dc;"></i>
<i class="x" style="left:1628px;top:445px;width:4px;height:10px;background:#c699dc;"></i>
<i class="x" style="left:1632px;top:455px;width:12px;height:5px;background:#c699dc;"></i>
<i class="x" style="left:1640px;top:445px;width:4px;height:15px;background:#c699dc;"></i>
<i class="x" style="left:1644px;top:415px;width:4px;height:30px;background:#c699dc;"></i>
<i class="x" style="left:1648px;top:400px;width:4px;height:15px;background:#c699dc;"></i>
<i class="x" style="left:1652px;top:415px;width:4px;height:20px;background:#c699dc;"></i>
<i class="x" style="left:1656px;top:435px;width:4px;height:15px;background:#c699dc;"></i>
<i class="x" style="left:1660px;top:415px;width:4px;height:20px;background:#c699dc;"></i>
<i class="x" style="left:1664px;top:400px;width:4px;height:15px;background:#c699dc;"></i>
<i class="x" style="left:1664px;top:400px;width:80px;height:5px;background:#c699dc;"></i>
<i class="x" style="left:1740px;top:400px;width:4px;height:35px;background:#c699dc;"></i>
<i class="x" style="left:1744px;top:435px;width:4px;height:60px;background:#c699dc;"></i>
<i class="x" style="left:1748px;top:495px;width:4px;height:35px;background:#c699dc;"></i>
<i class="x" style="left:1752px;top:435px;width:4px;height:60px;background:#c699dc;"></i>
<i class="x" style="left:1756px;top:400px;width:4px;height:35px;background:#c699dc;"></i>
<i class="x" style="left:1756px;top:400px;width:56px;height:5px;background:#c699dc;"></i>
<i class="x" style="left:1808px;top:400px;width:4px;height:40px;background:#c699dc;"></i>
<i class="x" style="left:1812px;top:440px;width:4px;height:75px;background:#c699dc;"></i>
<i class="x" style="left:1816px;top:515px;width:4px;height:40px;background:#c699dc;"></i>
<i class="x" style="left:1820px;top:440px;width:4px;height:75px;background:#c699dc;"></i>
<i class="x" style="left:1824px;top:400px;width:4px;height:40px;background:#c699dc;"></i>
<i class="x" style="left:1824px;top:400px;width:76px;height:5px;background:#c699dc;"></i>
<i class="x" style="left:1072px;top:400px;width:84px;height:5px;background:#79dcaa;"></i>
<i class="x" style="left:1152px;top:400px;width:4px;height:20px;background:#79dcaa;"></i>
<i class="x" style="left:1616px;top:550px;width:4px;height:10px;background:#79dcaa;"></i>
<i class="x" style="left:1620px;top:555px;width:4px;height:5px;background:#79dcaa;"></i>
<i class="x" style="left:1160px;top:555px;width:4px;height:5px;background:#d4d4d5;"></i>
<i class="x" style="left:1176px;top:555px;width:4px;height:5px;background:#d4d4d5;"></i>
<i class="x" style="left:1748px;top:555px;width:4px;height:5px;background:#d4d4d5;"></i>
<i class="x" style="left:1172px;top:555px;width:4px;height:5px;background:#ffe59e;"></i>
<i class="x" style="left:1612px;top:555px;width:4px;height:5px;background:#ffe59e;"></i>
<i class="x" style="left:1652px;top:555px;width:4px;height:5px;background:#ffe59e;"></i>
<i class="x" style="left:1656px;top:555px;width:4px;height:5px;background:#63b3ad;"></i>
<div class="l" style="left:1088px;top:420px"><b class="B">CPU0   1%</b></div>
<div class="l" style="left:1088px;top:440px"><b class="Y">CPU1   1%</b></div>
<div class="l" style="left:1088px;top:460px"><b class="G">CPU2   2%</b></div>
<div class="l" style="left:1088px;top:480px"><b class="R">CPU3   1%</b></div>
<div class="l" style="left:1088px;top:500px"><b class="p">CPU4 100%</b></div>
<div class="l" style="left:1088px;top:520px"><b class="t">CPU5   2%</b></div>
<div class="l" style="left:1088px;top:540px"><b class="W">CPU6   2%</b></div>
<i class="x" style="left:1088px;top:560px;width:72px;height:20px;background:#101317;"></i>
<div class="l" style="left:1088px;top:560px"><b class="gy">CPU7   1%</b></div>
<div class="l" style="left:1072px;top:620px"><b class="W bd">Partitio Mount    Used  Free</b></div>
<div class="l" style="left:1072px;top:640px"><b class="W">sda1     /boot/ef   0%  1022 MiB</b></div>
<div class="l" style="left:1072px;top:660px"><b class="W">sda2     /          5%  826 GiB</b></div>
<div class="l" style="left:1072px;top:720px"><b class="W">pch_cannonlake</b></div>
<div class="l" style="left:1304px;top:720px"><b class="G">70°C</b></div>
<div class="l" style="left:1072px;top:740px"><b class="W">iwlwifi_1</b></div>
<div class="l" style="left:1304px;top:740px"><b class="G">54°C</b></div>
<div class="l" style="left:1072px;top:760px"><b class="W">coretemp-Package id 0</b></div>
<div class="l" style="left:1304px;top:760px"><b class="R">86°C</b></div>
<div class="l" style="left:1072px;top:780px"><b class="W">coretemp-Core 0</b></div>
<div class="l" style="left:1304px;top:780px"><b class="R">86°C</b></div>
<i class="x" style="left:1352px;top:655px;width:16px;height:5px;background:#c699dc;"></i>
<i class="x" style="left:1584px;top:655px;width:320px;height:5px;background:#c699dc;"></i>
<div class="l" style="left:1368px;top:640px"><b class="p">Main  79% 5.37 GiB/7.62 GiB</b></div>
<div class="l" style="left:1080px;top:860px"><b class="W">Total Rx: 455 MiB</b></div>
<div class="l" style="left:1080px;top:880px"><b class="W">Rx/s:     0 bytes/s</b></div>
<div class="l" style="left:1080px;top:940px"><b class="W">Total Tx: 126 MiB</b></div>
<div class="l" style="left:1080px;top:960px"><b class="W">Tx/s:     0 bytes/s</b></div>
<i class="x" style="left:1072px;top:917.5px;width:408px;height:2.5px;background:#7ab0df;"></i>
<i class="x" style="left:1176px;top:900px;width:8px;height:20px;background:#7ab0df;"></i>
<i class="x" style="left:1208px;top:915px;width:8px;height:5px;background:#7ab0df;"></i>
<i class="x" style="left:1072px;top:997.5px;width:408px;height:2.5px;background:#7ab0df;"></i>
<i class="x" style="left:1176px;top:995px;width:8px;height:5px;background:#7ab0df;"></i>
<i class="x" style="left:1208px;top:980px;width:8px;height:20px;background:#7ab0df;"></i>
<div class="l" style="left:1504px;top:840px"><b class="W bd">Count   Command                         CPU%  Mem%</b></div>
<svg class="x" style="left:1856px;top:845px;" width="8" height="10" viewBox="0 0 8 10"><path d="M0 0h8L4 10z" fill="#d4d4d5"/></svg>
<i class="x" style="left:1496px;top:860px;width:416px;height:20px;background:#7ab0df;"></i>
<div class="l" style="left:1504px;top:860px"><b class="k">1       lua-language-se                  13.4 48.7</b></div>
<div class="l" style="left:1504px;top:880px"><b class="W">3       nvim                              0.3  2.3</b></div>
<div class="l" style="left:1504px;top:900px"><b class="W">1       kworker/3:0-events                0.1  0.0</b></div>
<div class="l" style="left:1504px;top:920px"><b class="W">3       st                                0.1  0.8</b></div>
<div class="l" style="left:1504px;top:940px"><b class="W">1       Xorg                              0.1  2.0</b></div>
<div class="l" style="left:1504px;top:960px"><b class="W">1       uuidd                             0.0  0.0</b></div>
<div class="l" style="left:1504px;top:980px"><b class="W">1       irq/128-mei_me                    0.0  0.0</b></div>
<div class="l" style="left:1504px;top:1000px"><b class="W">1       rcu_tasks_kthre                   0.0  0.0</b></div>
<i class="x" style="left:0px;top:1040px;width:24px;height:20px;background:#7ab0df;"></i>
<i class="x" style="left:24px;top:1040px;width:128px;height:20px;background:#23272d;"></i>
<svg class="x" style="left:24px;top:1040px;" width="8" height="20" viewBox="0 0 8 20"><path d="M0 0A8 10 0 0 1 0 20z" fill="#7ab0df"/></svg>
<svg class="x" style="left:7px;top:1042.5px;" width="15" height="15" viewBox="0 0 15 15"><circle cx="7.2" cy="7.3" r="5.7" fill="none" stroke="#101317" stroke-width="1.3"/><circle cx="7.2" cy="7.3" r="3.2" fill="#101317"/><circle cx="2.9" cy="3.2" r="1.3" fill="#7ab0df"/><circle cx="3.3" cy="3.0" r="0.7" fill="#101317"/></svg>
<i class="x" style="left:152px;top:1040px;width:88px;height:20px;background:#1b1f24;"></i>
<svg class="x" style="left:144px;top:1040px;" width="8" height="20" viewBox="0 0 8 20"><rect width="8" height="20" fill="#1b1f24"/><path d="M0 0A8 10 0 0 1 0 20z" fill="#23272d"/></svg>
<svg class="x" style="left:240px;top:1040px;" width="8" height="20" viewBox="0 0 8 20"><path d="M0 0A8 10 0 0 1 0 20z" fill="#1b1f24"/></svg>
<svg class="x" style="left:40px;top:1044px;" width="12" height="12" viewBox="0 0 12 12"><path d="M5.9 0.2C3.4 0.2 3.5 1.3 3.5 1.3v1.6h2.6v0.6H2.2S0.2 3.3 0.2 6s1.7 2.7 1.7 2.7h1.2V7.2s-0.1-1.7 1.7-1.7h2.6s1.6 0 1.6-1.6V1.7S9.2 0.2 5.9 0.2z" fill="#d4d4d5" stroke="#d4d4d5" stroke-width=".25"/><path d="M6.1 11.8c2.5 0 2.4-1.1 2.4-1.1V9.1H5.9V8.5h3.9s2 .2 2-2.5-1.7-2.7-1.7-2.7H8.9v1.5s.1 1.7-1.7 1.7H4.6S3 6.5 3 8.1v2.2s-.2 1.5 3.1 1.5z" fill="#d4d4d5" stroke="#d4d4d5" stroke-width=".25"/><circle cx="4.6" cy="1.7" r=".55" fill="#101317"/><circle cx="7.4" cy="10.3" r=".55" fill="#101317"/></svg>
<div class="l" style="left:56px;top:1040px"><b class="W">python2.py</b></div>
<svg class="x" style="left:160px;top:1045px;" width="13" height="10" viewBox="0 0 13 10"><path d="M0.7 1.6Q0.7 0.7 1.6 0.7H4.4L5.6 2.2H11.4Q12.3 2.2 12.3 3.1V8.4Q12.3 9.3 11.4 9.3H1.6Q0.7 9.3 0.7 8.4z" fill="none" stroke="#43474d" stroke-width="1.3"/></svg>
<div class="l" style="left:176px;top:1040px"><b class="sg">samples</b></div>
<svg class="x" style="left:248px;top:1044px;" width="13" height="13" viewBox="0 0 13 13"><circle cx="6.5" cy="6.5" r="6" fill="#4a4e55"/><path d="M6.5 3.2v6.6M3.2 6.5h6.6" stroke="#15191e" stroke-width="1.5"/></svg>
<svg class="x" style="left:1639px;top:1042px;" width="17" height="16" viewBox="0 0 17 16"><circle cx="6.4" cy="8" r="4.41" fill="none" stroke="#484c53" stroke-width="2.06" stroke-dasharray="1.732 1.732"/><circle cx="6.4" cy="8" r="3.63" fill="#484c53"/><circle cx="6.4" cy="8" r="1.67" fill="#15191e"/><circle cx="13" cy="4.2" r="2.79" fill="none" stroke="#484c53" stroke-width="1.30" stroke-dasharray="1.096 1.096"/><circle cx="13" cy="4.2" r="2.29" fill="#484c53"/><circle cx="13" cy="4.2" r="1.05" fill="#15191e"/><circle cx="13" cy="12" r="2.79" fill="none" stroke="#484c53" stroke-width="1.30" stroke-dasharray="1.096 1.096"/><circle cx="13" cy="12" r="2.29" fill="#484c53"/><circle cx="13" cy="12" r="1.05" fill="#15191e"/></svg>
<div class="l" style="left:1664px;top:1040px"><b class="sg">LSP</b></div>
<svg class="x" style="left:1696px;top:1044px;" width="9" height="13" viewBox="0 0 10 15"><circle cx="2.6" cy="2.6" r="1.6" fill="none" stroke="#43474d" stroke-width="1.1"/><circle cx="2.6" cy="12.2" r="1.6" fill="none" stroke="#43474d" stroke-width="1.1"/><circle cx="7.6" cy="4.6" r="1.6" fill="none" stroke="#43474d" stroke-width="1.1"/><path d="M2.6 4.2v6.4M7.6 6.2q0 2.6-5 3.4" fill="none" stroke="#43474d" stroke-width="1.1"/></svg>
<div class="l" style="left:1712px;top:1040px"><b class="sg">main</b></div>
<svg class="x" style="left:1752px;top:1040px;" width="16" height="20" viewBox="0 0 16 20"><path d="M10 0A10 10 0 0 0 10 20H16V0z" fill="#2a2d33"/><path d="M18 0A10 10 0 0 0 18 20z" fill="#c397d8"/></svg>
<i class="x" style="left:1768px;top:1040px;width:16px;height:20px;background:#c397d8;"></i>
<svg class="x" style="left:1765px;top:1044px;" width="15" height="12" viewBox="0 0 15 12"><path d="M0.6 4.2H9.4Q11 4.2 11 2.8T9.6 1.3Q8.4 1.3 8.2 2.3M0.6 6.6H12Q13.8 6.6 13.8 5.1T12.4 3.6M3.4 9H10.4Q12 9 12 10.2T10.8 11.3Q9.8 11.3 9.6 10.6" fill="none" stroke="#101317" stroke-width="1.2" stroke-linecap="round"/></svg>
<i class="x" style="left:1784px;top:1040px;width:64px;height:20px;background:#1b1f24;"></i>
<div class="l" style="left:1792px;top:1040px"><b class="p">INSERT</b></div>
<svg class="x" style="left:1848px;top:1040px;" width="16" height="20" viewBox="0 0 16 20"><rect x="0" width="8" height="20" fill="#1b1f24"/><path d="M10 0A10 10 0 0 0 10 20H16V0z" fill="#2a2d33"/><path d="M18 0A10 10 0 0 0 18 20z" fill="#37d99e"/></svg>
<i class="x" style="left:1864px;top:1040px;width:16px;height:20px;background:#37d99e;"></i>
<svg class="x" style="left:1863px;top:1044px;" width="13" height="12" viewBox="0 0 13 12"><path d="M0.5 1.6H7.2M9.2 1.6H12.5M0.5 6H12.5M0.5 10.4H3.6M5.6 10.4H12.5" stroke="#101317" stroke-width="2"/></svg>
<i class="x" style="left:1880px;top:1040px;width:40px;height:20px;background:#1b1f24;"></i>
<div class="l" style="left:1888px;top:1040px"><b class="g">Bot</b></div>
</body></html>
